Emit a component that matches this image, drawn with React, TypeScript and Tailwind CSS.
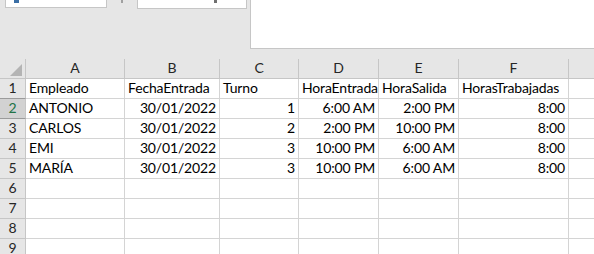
import React from 'react';

const cols = [
  { key: 'A', w: 'w-[99px]' },
  { key: 'B', w: 'w-[95px]' },
  { key: 'C', w: 'w-[79px]' },
  { key: 'D', w: 'w-[80px]' },
  { key: 'E', w: 'w-[80px]' },
  { key: 'F', w: 'w-[110px]' },
  { key: '', w: 'flex-1' },
];

type Cell = { v: string; right?: boolean };

const rows: Cell[][] = [
  [
    { v: 'Empleado' },
    { v: 'FechaEntrada' },
    { v: 'Turno' },
    { v: 'HoraEntrada' },
    { v: 'HoraSalida' },
    { v: 'HorasTrabajadas' },
  ],
  [
    { v: 'ANTONIO' },
    { v: '30/01/2022', right: true },
    { v: '1', right: true },
    { v: '6:00 AM', right: true },
    { v: '2:00 PM', right: true },
    { v: '8:00', right: true },
  ],
  [
    { v: 'CARLOS' },
    { v: '30/01/2022', right: true },
    { v: '2', right: true },
    { v: '2:00 PM', right: true },
    { v: '10:00 PM', right: true },
    { v: '8:00', right: true },
  ],
  [
    { v: 'EMI' },
    { v: '30/01/2022', right: true },
    { v: '3', right: true },
    { v: '10:00 PM', right: true },
    { v: '6:00 AM', right: true },
    { v: '8:00', right: true },
  ],
  [
    { v: 'MARÍA' },
    { v: '30/01/2022', right: true },
    { v: '3', right: true },
    { v: '10:00 PM', right: true },
    { v: '6:00 AM', right: true },
    { v: '8:00', right: true },
  ],
  [],
  [],
  [],
  [],
];

export default function App() {
  return (
    <div className="w-[594px] h-[254px] overflow-hidden bg-white font-['Lato',sans-serif] text-[14px] tracking-[-0.15px] text-black">
      {/* ribbon leftovers */}
      <div className="h-[59px] bg-[#e6e6e6] flex items-start">
        <div className="ml-[5px] w-[102px] h-[8px] bg-white border border-t-0 border-[#c6c6c6] relative">
          <span className="absolute left-[8px] top-0 w-[5px] h-[3px] bg-[#3a6ea5]" />
        </div>
        <div className="ml-[14px] w-[2px] h-[3px] bg-[#a0a0a0]" />
        <div className="ml-[14px] w-[110px] h-[9px] bg-white border border-t-0 border-[#c6c6c6] relative">
          <span className="absolute left-[76px] top-0 w-[3px] h-[3px] bg-[#707070]" />
        </div>
        <div className="ml-[3px] flex-1 h-[49px] bg-white border-l border-b border-[#c6c6c6]" />
      </div>

      {/* column header */}
      <div className="flex h-[20px] bg-[#e6e6e6] border-b border-[#c6c6c6] text-[#262626]">
        <div className="w-[26px] border-r border-[#c6c6c6] relative">
          <svg className="absolute left-[10px] top-[5px]" width="12" height="12" viewBox="0 0 12 12">
            <polygon points="12,0 12,12 0,12" fill="#b4b4b4" />
          </svg>
        </div>
        {cols.map((c, i) => (
          <div
            key={i}
            className={`${c.w} ${c.key ? 'border-r border-[#c6c6c6]' : ''} flex items-end justify-center pb-[3px] leading-none`}
          >
            {c.key}
          </div>
        ))}
      </div>

      {/* rows */}
      {rows.map((r, ri) => {
        const active = ri === 1;
        return (
          <div key={ri} className="flex h-[20px]">
            <div
              className={`w-[26px] flex items-end justify-center pb-[3px] leading-none border-b border-r ${
                active ? 'bg-[#d2d2d2] text-[#217346] border-r-[#c6c6c6] border-b-[#9b9b9b]' : 'bg-[#e6e6e6] text-[#262626] border-[#c6c6c6]'
              } ${ri === 0 ? 'border-b-[#9b9b9b]' : ''}`}
            >
              {ri + 1}
            </div>
            {cols.map((c, ci) => {
              const cell = r[ci];
              return (
                <div
                  key={ci}
                  className={`${c.w} ${c.key ? 'border-r' : ''} border-b border-[#d4d4d4] px-[3px] pb-[3px] flex items-end leading-none whitespace-nowrap overflow-hidden relative ${
                    cell?.right ? 'justify-end' : 'justify-start'
                  }`}
                >
                  {active && ci === 0 && <span className="absolute left-[-2px] top-0 w-[2px] h-[20px] bg-[#217346]" />}
                  {cell?.v}
                </div>
              );
            })}
          </div>
        );
      })}
    </div>
  );
}
